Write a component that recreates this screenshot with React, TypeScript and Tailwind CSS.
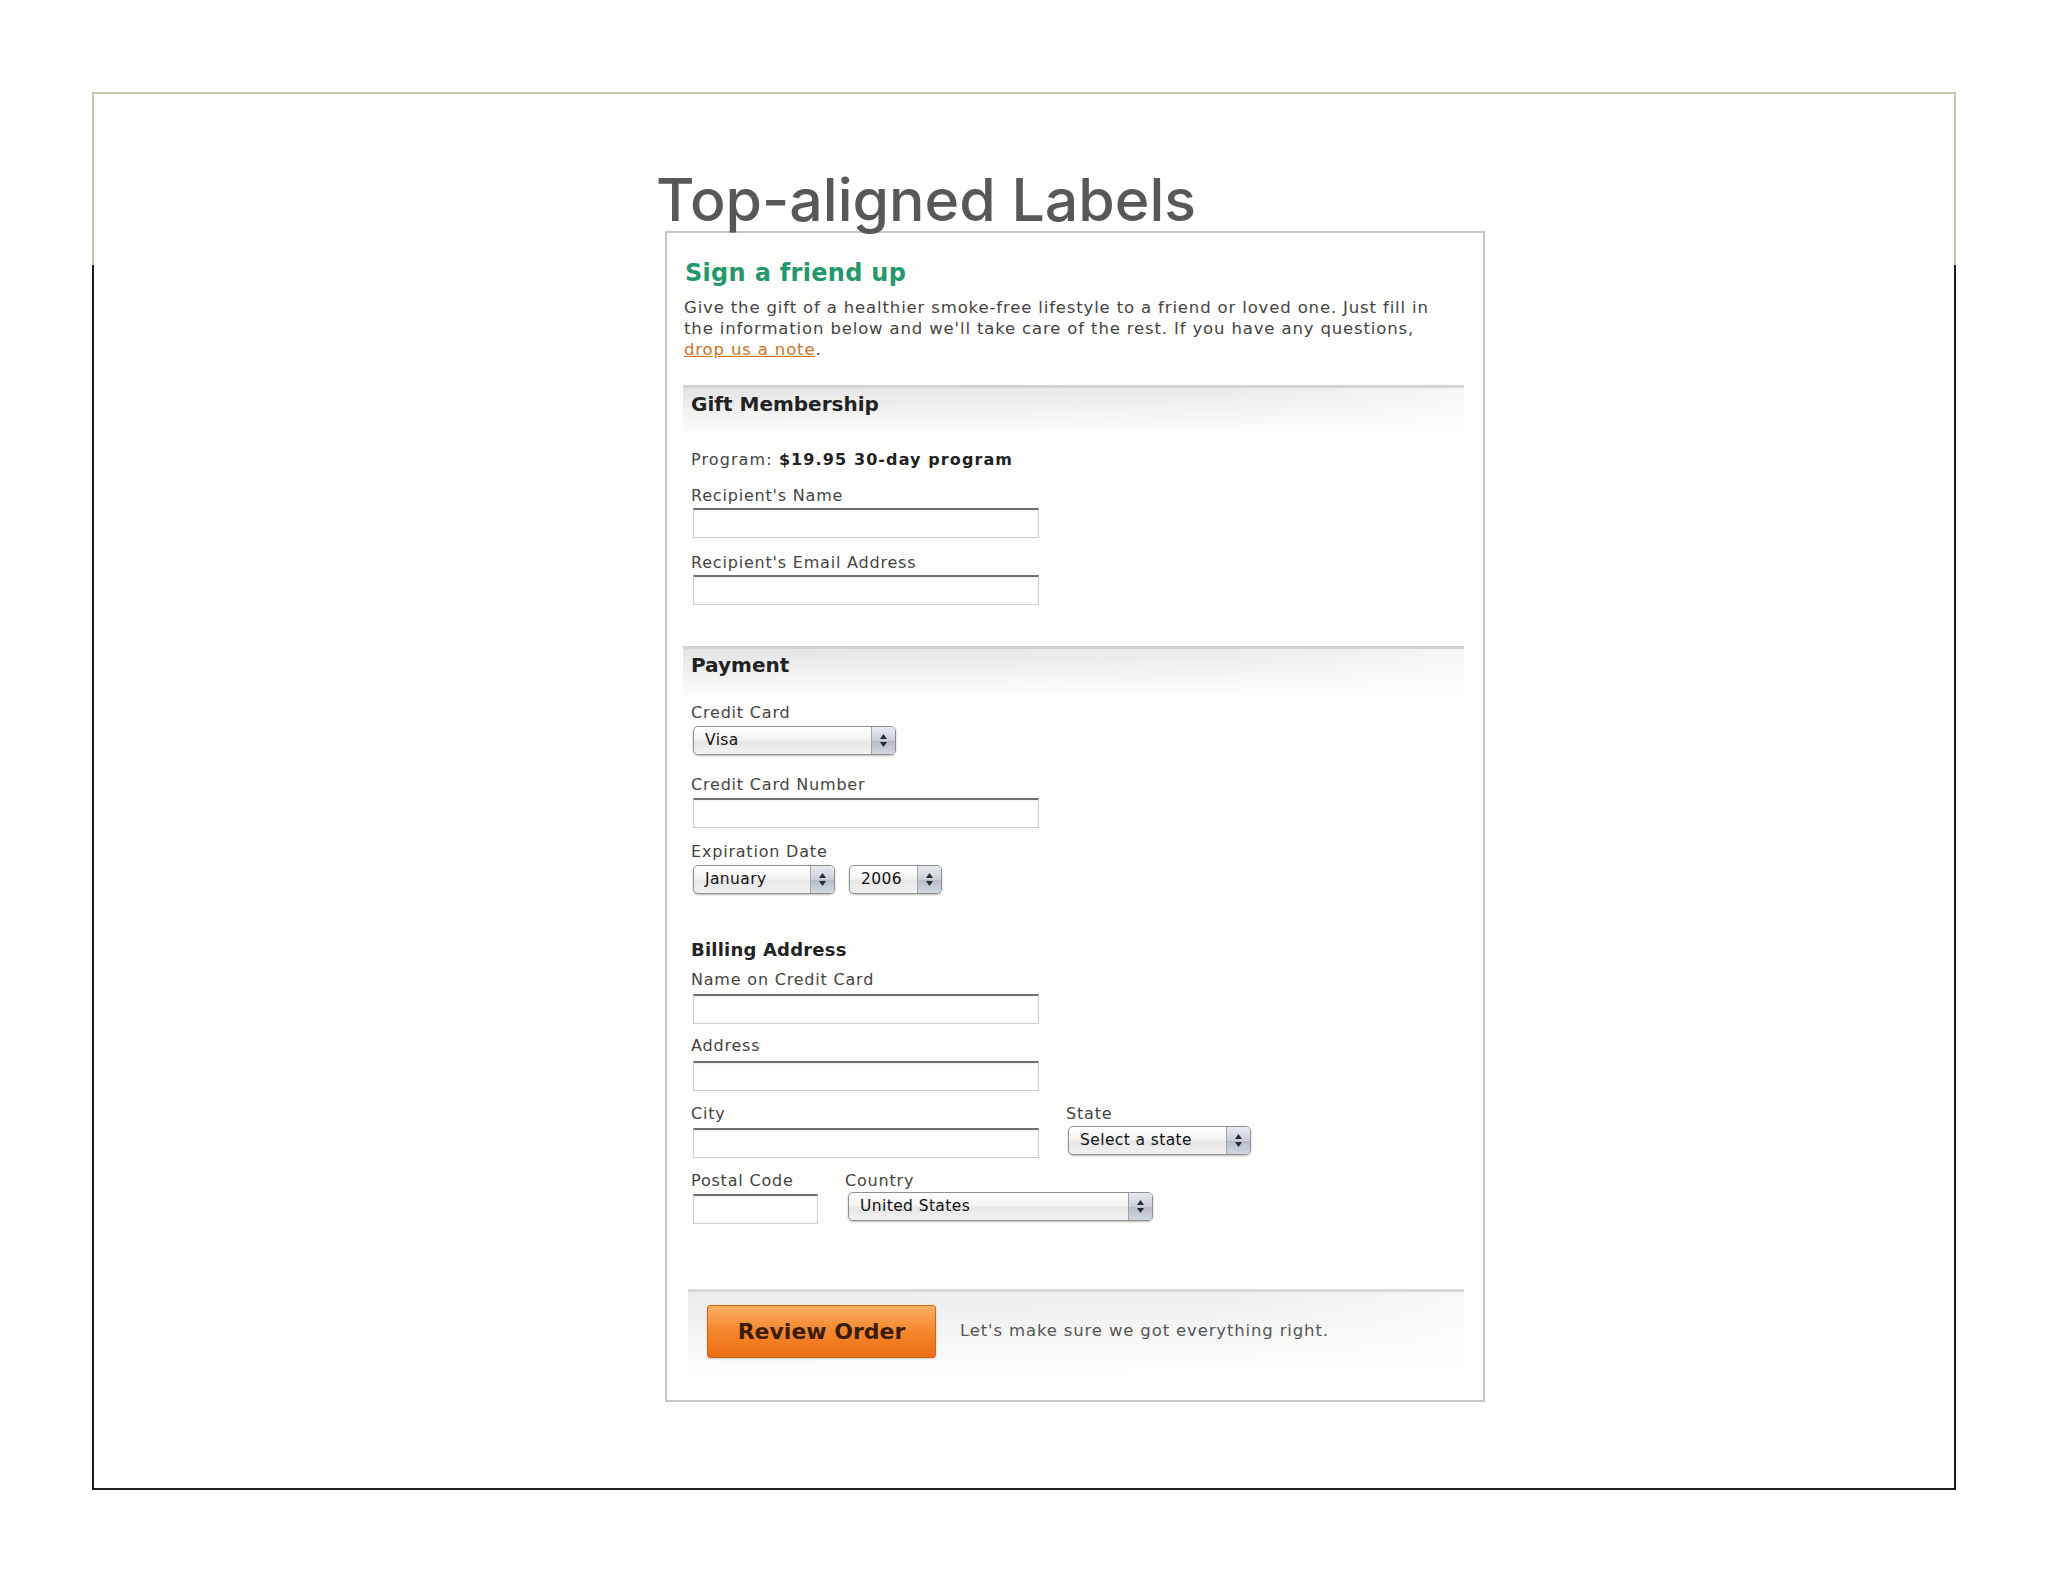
import React from "react";

function Arrows() {
  return (
    <span className="flex w-[24px] flex-col items-center justify-center gap-[3px] border-l border-[#a3a3a3] bg-[linear-gradient(to_bottom,#e8ebf0,#c9cfd9_50%,#b3bbc9_51%,#d3d8e0)]">
      <svg width="7" height="5" viewBox="0 0 7 5">
        <path d="M3.5 0L7 5H0z" fill="#2a2a2a" />
      </svg>
      <svg width="7" height="5" viewBox="0 0 7 5">
        <path d="M0 0h7L3.5 5z" fill="#2a2a2a" />
      </svg>
    </span>
  );
}

function Select({ value, className }: { value: string; className: string }) {
  return (
    <div
      className={`flex h-[29px] overflow-hidden rounded-[5px] border border-[#8f8f8f] bg-[linear-gradient(to_bottom,#ffffff_0%,#f4f4f4_45%,#e6e6e6_55%,#f3f3f3_100%)] shadow-[0_1px_2px_rgba(0,0,0,0.25)] ${className}`}
    >
      <span className="flex-1 truncate pl-[11px] text-[15.5px] leading-[27px] tracking-[0.4px] text-[#111]">
        {value}
      </span>
      <Arrows />
    </div>
  );
}

function Input({ className }: { className: string }) {
  return (
    <div
      className={`h-[30px] border border-[#cfcfcf] border-t-2 border-t-[#707070] bg-white shadow-[inset_0_1px_2px_rgba(0,0,0,0.08)] ${className}`}
    />
  );
}

function Label({ children, className = "" }: { children: React.ReactNode; className?: string }) {
  return (
    <div className={`text-[16px] leading-[18px] tracking-[0.8px] text-[#454545] ${className}`}>
      {children}
    </div>
  );
}

function Band({ title, className }: { title: string; className: string }) {
  return (
    <div
      className={`h-[50px] border-t-[3px] border-[#d3d3d3] bg-[linear-gradient(to_bottom,rgba(253,253,251,0),#fdfdfb),linear-gradient(to_right,#e4e4e4,#ebebeb_70%,#f6f6f6)] pl-[8px] pt-[4px] ${className}`}
    >
      <div className="text-[20px] font-bold leading-[24px] text-[#222]">{title}</div>
    </div>
  );
}

export default function App() {
  return (
    <div className="min-h-[1582px] w-[2048px] bg-white pl-[92px] pt-[92px]">
      <div className="h-[1398px] w-[1864px] border-2 [border-image:linear-gradient(to_bottom,#c5c8ab,#c5c8ab_172px,#1e1e1e_172px,#1e1e1e)_1] bg-white pl-[562px] pt-[76px]">
        <div className="font-['Inter',sans-serif] text-[59px] font-medium leading-[59px] text-[#585858]">
          Top-aligned Labels
        </div>
        <div className="ml-[9px] mt-[2px] h-[1171px] w-[820px] border-2 border-[#c6c6c6] bg-[#fdfdfb] pl-[16px] pr-[19px] pt-[26px] font-['DejaVu_Sans',sans-serif]">
          <div className="ml-[2px] text-[24px] font-bold leading-[28px] tracking-[0.3px] text-[#23996b]">
            Sign a friend up
          </div>
          <p className="ml-[1px] mt-[10px] text-[16.5px] leading-[21px] tracking-[0.85px] text-[#444]">
            Give the gift of a healthier smoke-free lifestyle to a friend or loved one. Just fill in
            <br />
            the information below and we'll take care of the rest. If you have any questions,
            <br />
            <span className="text-[#cc7426] underline">drop us a note</span>.
          </p>

          <Band title="Gift Membership" className="mt-[25px]" />
          <div className="pl-[8px]">
            <div className="mt-[16px] text-[16px] leading-[18px] tracking-[1.1px] text-[#454545]">
              Program: <span className="font-bold text-[#222]">$19.95 30-day program</span>
            </div>
            <Label className="mt-[18px]">Recipient's Name</Label>
            <Input className="ml-[2px] mt-[3px] w-[346px]" />
            <Label className="mt-[16px]">Recipient's Email Address</Label>
            <Input className="ml-[2px] mt-[3px] w-[346px]" />
          </div>

          <Band title="Payment" className="mt-[41px]" />
          <div className="pl-[8px]">
            <Label className="mt-[8px]">Credit Card</Label>
            <Select value="Visa" className="ml-[2px] mt-[4px] w-[203px]" />
            <Label className="mt-[21px]">Credit Card Number</Label>
            <Input className="ml-[2px] mt-[4px] w-[346px]" />
            <Label className="mt-[15px]">Expiration Date</Label>
            <div className="ml-[2px] mt-[4px] flex gap-[14px]">
              <Select value="January" className="w-[142px]" />
              <Select value="2006" className="w-[93px]" />
            </div>

            <div className="mt-[46px] text-[18px] font-bold leading-[20px] tracking-[0.2px] text-[#222]">
              Billing Address
            </div>
            <Label className="mt-[11px]">Name on Credit Card</Label>
            <Input className="ml-[2px] mt-[5px] w-[346px]" />
            <Label className="mt-[13px]">Address</Label>
            <Input className="ml-[2px] mt-[6px] w-[346px]" />

            <div className="mt-[14px] flex">
              <div className="w-[375px]">
                <Label>City</Label>
                <Input className="ml-[2px] mt-[5px] w-[346px]" />
              </div>
              <div>
                <Label>State</Label>
                <Select value="Select a state" className="ml-[2px] mt-[3px] w-[183px]" />
              </div>
            </div>

            <div className="mt-[14px] flex">
              <div className="w-[154px]">
                <Label>Postal Code</Label>
                <Input className="ml-[2px] mt-[4px] w-[125px]" />
              </div>
              <div>
                <Label>Country</Label>
                <Select value="United States" className="ml-[3px] mt-[2px] w-[305px]" />
              </div>
            </div>
          </div>

          <div className="ml-[5px] mt-[65px] flex h-[86px] w-[776px] items-start border-t-[3px] border-[#dadada] bg-[linear-gradient(to_bottom,rgba(253,253,251,0),#fdfdfb),linear-gradient(to_right,#ebebeb,#efefef_70%,#f8f8f8)] pl-[19px] pt-[13px]">
            <div className="flex h-[53px] w-[229px] items-center justify-center rounded-[3px] border border-[#cf6414] bg-[linear-gradient(to_bottom,#fbb062,#f58a30_45%,#ec6e14)] shadow-[0_1px_2px_rgba(0,0,0,0.2)]">
              <span className="text-[22px] font-bold leading-[26px] text-[#3a1c08]">Review Order</span>
            </div>
            <div className="ml-[24px] mt-[16px] text-[16.5px] leading-[20px] tracking-[0.85px] text-[#555]">
              Let's make sure we got everything right.
            </div>
          </div>
        </div>
      </div>
    </div>
  );
}
